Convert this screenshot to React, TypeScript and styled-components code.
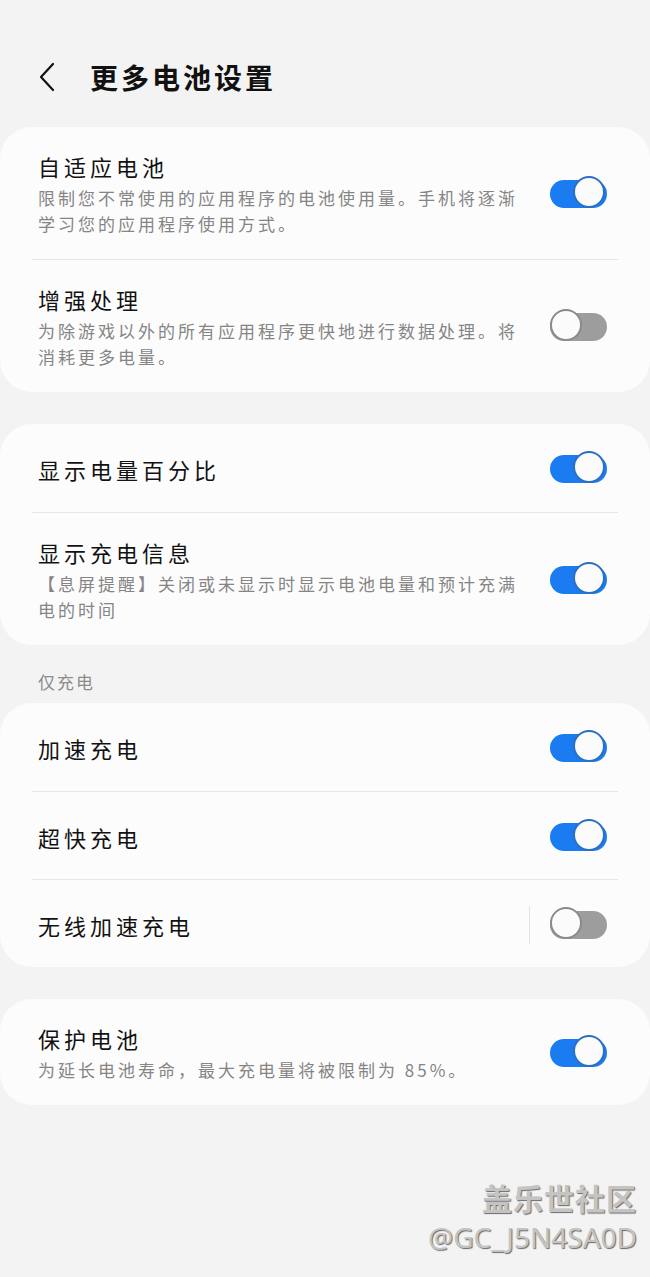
import React from 'react';
import styled, { createGlobalStyle } from 'styled-components';

type Item = {
   title: string;
   desc?: string;
   on: boolean;
   split?: boolean;
};

type Group = {
   label?: string;
   items: Item[];
};

const groups: Group[] = [
   {
      items: [
         {
            title: '自适应电池',
            desc: '限制您不常使用的应用程序的电池使用量。手机将逐渐学习您的应用程序使用方式。',
            on: true,
         },
         {
            title: '增强处理',
            desc: '为除游戏以外的所有应用程序更快地进行数据处理。将消耗更多电量。',
            on: false,
         },
      ],
   },
   {
      items: [
         { title: '显示电量百分比', on: true },
         {
            title: '显示充电信息',
            desc: '【息屏提醒】关闭或未显示时显示电池电量和预计充满电的时间',
            on: true,
         },
      ],
   },
   {
      label: '仅充电',
      items: [
         { title: '加速充电', on: true },
         { title: '超快充电', on: true },
         { title: '无线加速充电', on: false, split: true },
      ],
   },
   {
      items: [
         {
            title: '保护电池',
            desc: '为延长电池寿命，最大充电量将被限制为 85%。',
            on: true,
         },
      ],
   },
];

function App() {
   return (
      <>
         <GlobalStyle />
         <Page>
            <Header>
               <BackButton aria-label="返回">
                  <svg width="20" height="30" viewBox="0 0 20 30">
                     <path
                        d="M16 2 L4 15 L16 28"
                        fill="none"
                        stroke="#111"
                        strokeWidth="2.2"
                        strokeLinecap="round"
                        strokeLinejoin="round"
                     />
                  </svg>
               </BackButton>
               <HeaderTitle>更多电池设置</HeaderTitle>
            </Header>

            {groups.map((group, gi) => (
               <Section key={gi}>
                  {group.label && <SectionLabel>{group.label}</SectionLabel>}
                  <Card>
                     {group.items.map((item, i) => (
                        <Row key={item.title} $first={i === 0}>
                           <RowText>
                              <RowTitle>{item.title}</RowTitle>
                              {item.desc && <RowDesc>{item.desc}</RowDesc>}
                           </RowText>
                           {item.split && <Split />}
                           <Toggle $on={item.on}>
                              <Knob $on={item.on} />
                           </Toggle>
                        </Row>
                     ))}
                  </Card>
               </Section>
            ))}

            <Watermark>
               <WatermarkBrand>盖乐世社区</WatermarkBrand>
               <WatermarkUser>@GC_J5N4SA0D</WatermarkUser>
            </Watermark>
         </Page>
      </>
   );
}

export default App;

const GlobalStyle = createGlobalStyle`
   html, body {
      margin: 0;
      padding: 0;
      background: #f3f3f3;
   }
   body {
      font-family: "Noto Sans CJK SC", "Noto Sans", sans-serif;
   }
`;

const Page = styled.div`
   position: relative;
   width: 650px;
   min-height: 1277px;
   background: #f3f3f3;
   overflow: hidden;
`;

const Header = styled.header`
   display: flex;
   align-items: center;
   height: 127px;
   padding: 26px 0 0 37px;
   box-sizing: border-box;
`;

const BackButton = styled.div`
   display: flex;
   align-items: center;
   width: 53px;
`;

const HeaderTitle = styled.h1`
   margin: 0;
   font-size: 28px;
   font-weight: 700;
   letter-spacing: 3px;
   color: #111;
`;

const Section = styled.section`
   margin-bottom: 32px;
`;

const SectionLabel = styled.div`
   margin-top: -32px;
   height: 58px;
   box-sizing: border-box;
   padding: 14px 0 0 38px;
   display: flex;
   align-items: center;
   font-size: 17px;
   letter-spacing: 2px;
   color: #8c8c8c;
`;

const Card = styled.div`
   background: #fcfcfc;
   border-radius: 32px;
   padding: 0 32px;
`;

const Row = styled.div<{ $first: boolean }>`
   display: flex;
   align-items: center;
   min-height: 88px;
   padding: 24px 11px 22px 6px;
   box-sizing: border-box;
   border-top: ${(p) => (p.$first ? 'none' : '1px solid #e6e6e6')};
`;

const RowText = styled.div`
   flex: 1;
   padding-right: 18px;
`;

const RowTitle = styled.div`
   font-size: 22px;
   line-height: 30px;
   letter-spacing: 4px;
   color: #121212;
`;

const RowDesc = styled.div`
   margin-top: 4px;
   font-size: 17px;
   line-height: 26px;
   letter-spacing: 3px;
   color: #858585;
`;

const Split = styled.div`
   width: 1px;
   height: 38px;
   background: #e4e4e4;
   margin-right: 20px;
`;

const Toggle = styled.div<{ $on: boolean }>`
   position: relative;
   flex: none;
   width: 57px;
   height: 28px;
   border-radius: 14px;
   background: ${(p) => (p.$on ? '#1a7cf0' : '#9d9d9d')};
`;

const Knob = styled.div<{ $on: boolean }>`
   position: absolute;
   top: -4px;
   left: ${(p) => (p.$on ? '23px' : '0')};
   width: 32px;
   height: 32px;
   border-radius: 50%;
   box-sizing: border-box;
   background: #fbfbfb;
   border: 2px solid ${(p) => (p.$on ? '#2a6fc4' : '#8a8a8a')};
`;

const Watermark = styled.div`
   position: absolute;
   right: 13px;
   top: 1176px;
   display: flex;
   flex-direction: column;
   align-items: flex-end;
   color: #c4c4c4;
   text-shadow: 1px 1px 1px #6a6a6a;
`;

const WatermarkBrand = styled.div`
   font-size: 30px;
   line-height: 42px;
   font-weight: 700;
   letter-spacing: 1px;
`;

const WatermarkUser = styled.div`
   font-family: "Noto Sans", sans-serif;
   font-size: 28px;
   line-height: 38px;
`;
